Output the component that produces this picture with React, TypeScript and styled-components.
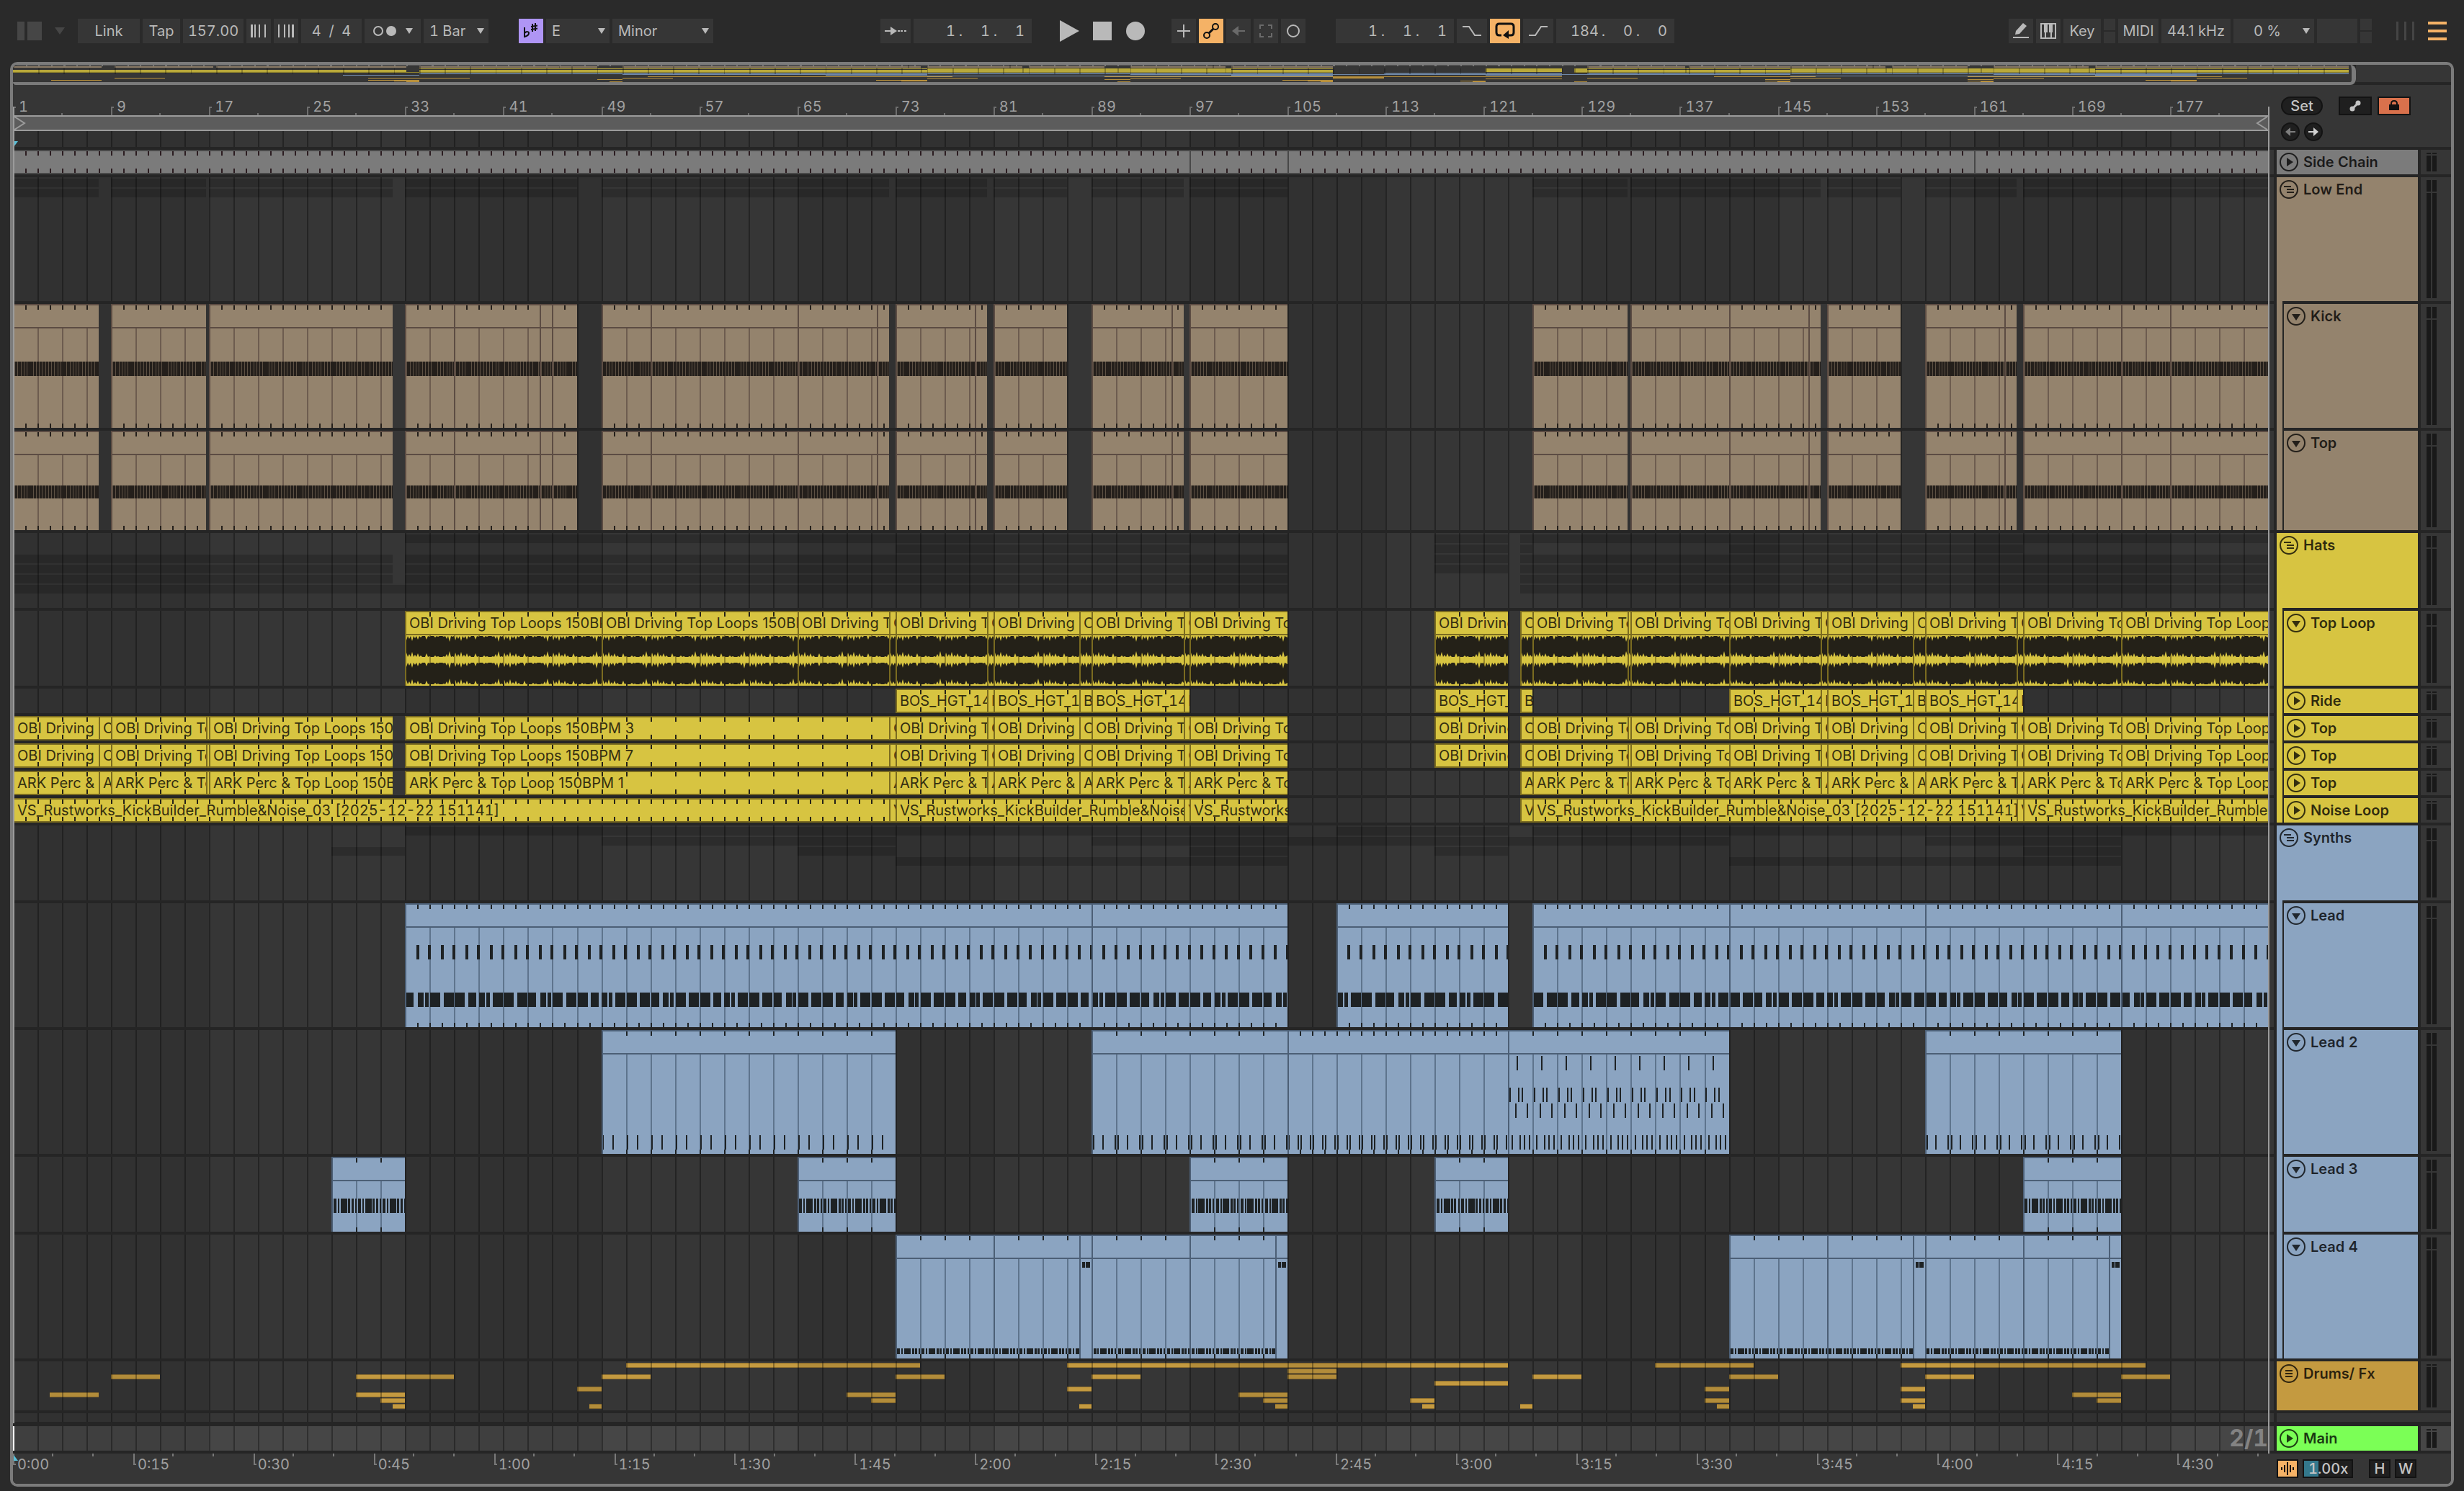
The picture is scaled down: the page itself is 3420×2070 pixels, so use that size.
import React from "react";
import styled, { createGlobalStyle, css } from "styled-components";

/* ---------- palette ---------- */

const c = {
  page: "#2a2a2a",
  control: "#363636",
  panel: "#363636",
  divider: "#252525",
  frame: "#7b7b7b",
  text: "#b9b9b9",
  dimText: "#a0a0a0",
  orange: "#f5b266",
  purple: "#af95f5",
  gray: "#7b7b7b",
  brown: "#94836d",
  yellow: "#d7c441",
  blue: "#8ba4c1",
  gold: "#c49a40",
  green: "#7bff56",
};

const GlobalStyle = createGlobalStyle`
  * { box-sizing: border-box; }
  body {
    margin: 0;
    background: ${c.page};
    color: ${c.text};
    font-family: Inter, "Open Sans", sans-serif;
    font-size: 20px;
    font-variant-numeric: tabular-nums;
    line-height: 24px;
  }
  button, input, select { font: inherit; font-variant-numeric: tabular-nums; color: inherit; margin: 0; padding: 0; border: 0; border-radius: 0; }
`;

/* ---------- time scale ---------- */

const BARS = 184;
const CANVAS = 3130;
const X = (bar: number) => Math.round(((bar - 1) * CANVAS) / BARS);
const pct = (px: number) => `${(px / CANVAS) * 100}%`;

type Range = [number, number];

/** Consecutive clips that share their boundaries. */
const chain = (...points: number[]): Range[] =>
  points.slice(1).map((end, i) => [points[i], end]);

/* ---------- arrangement data ---------- */

const kickClips = [
  ...chain(1, 8), ...chain(9, 16.75), ...chain(17, 32), ...chain(33, 37, 44, 45, 47),
  ...chain(49, 53, 65, 71.5, 72.5), ...chain(73, 79.5, 80.5), ...chain(81, 87),
  ...chain(89, 95.5, 96.5), ...chain(97, 105), ...chain(125, 132.75), ...chain(133, 141, 147.5, 148.5),
  ...chain(149, 155), ...chain(157, 163.5, 164.5), ...chain(165, 173, 177, 185),
];
const lateLoops = chain(124, 125, 132.75, 133, 141, 148.5, 149, 156, 157, 164.5, 165, 173, 185);
const topLoopClips = [
  ...chain(33, 49, 65, 72.5, 73, 80.5, 81, 88, 89, 96.5, 97, 105), ...chain(117, 123), ...lateLoops,
];
const rideClips = [
  ...chain(73, 80.5, 81, 88, 89, 96.5, 97), ...chain(117, 123), ...chain(124, 125),
  ...chain(141, 148.5, 149, 156, 157, 164.5, 165),
];
const earlyTops = [
  ...chain(1, 8, 9, 16.75, 17, 32), ...chain(33, 72.5, 73, 80.5, 81, 88, 89, 96.5, 97, 105),
];
const topClips = [...earlyTops, ...chain(117, 123), ...lateLoops];
const percClips = [...earlyTops, ...lateLoops];
const noiseClips = [...chain(1, 72.5, 73, 96.5, 97, 105), ...chain(124, 125, 164.5, 165, 185)];
const leadClips = [...chain(33, 89, 105), ...chain(109, 123), ...chain(125, 141, 157, 173, 185)];
const lead2Clips = [...chain(49, 73), ...chain(89, 105, 123, 141), ...chain(157, 173)];
const lead3Clips: Range[] = [[27, 33], [65, 73], [97, 105], [117, 123], [165, 173]];
const lead4Clips = [...chain(73, 81, 88, 89, 97, 104, 105), ...chain(141, 149, 156, 157, 165, 172, 173)];

const drumRows: Range[][] = [
  [[51, 75], [87, 123], [135, 143], [155, 175]],
  [[105, 109]],
  [[9, 13], [29, 37], [49, 53], [73, 77], [89, 93], [105, 109], [125, 129], [141, 145], [157, 161], [173, 177]],
  [[117, 123]],
  [[47, 49], [87, 89], [139, 141], [155, 157]],
  [[4, 8], [29, 33], [69, 73], [101, 105], [169, 173]],
  [[31, 33], [71, 73], [103, 105], [115, 117], [139, 141], [155, 157], [171, 173]],
  [[32, 33], [48, 49], [88, 89], [104, 105], [116, 117], [124, 125], [140, 141], [156, 157]],
];

type Kind = "side" | "kick" | "loop" | "audio" | "lead" | "lead2" | "lead3" | "lead4";
type Tone = "gray" | "brown" | "yellow" | "blue";

const tones: Record<Tone, { fill: string; edge: string; ink: string }> = {
  gray: { fill: c.gray, edge: "#484848", ink: "#2b1c20" },
  brown: { fill: c.brown, edge: "#5c4c43", ink: "#241f1b" },
  yellow: { fill: c.yellow, edge: "#7a6b20", ink: "#242118" },
  blue: { fill: c.blue, edge: "#4c5f76", ink: "#1e2224" },
};

/* ---------- clip drawings ---------- */

const rect = (x: number, y: number, w: number, h: number) => `M${x} ${y}h${w}v${h}h${-w}z`;

const phrase: Range[] = [[0.15, 0.4], [0.5, 0.62], [0.72, 1.25], [1.35, 1.5], [1.6, 1.8], [1.9, 2]];

function notesFor(kind: Kind, s: number, e: number): string {
  let d = "";
  const note = (bar: number, y: number, w: number, h: number) => {
    const x = X(bar);
    if (x >= X(s) && x < X(e)) d += rect(x, y, w, h);
  };
  if (kind === "lead") {
    for (let b = s; b < e; b++) {
      note(b + ((b - s) % 2 ? 0.86 : 0.9), 58, 4, 20);
      const cut = (b * 7) % 5;
      if (cut === 3) {
        note(b + 0.05, 124, 8, 20);
        note(b + 0.62, 124, 5, 20);
      } else {
        note(b + (b % 2 ? 0.06 : 0.14), 124, cut === 1 ? 11 : 14, 20);
      }
    }
  } else if (kind === "lead2") {
    if (s === 123) {
      for (let b = s; b < e; b += 2) {
        note(b + 0.7, 36, 2, 20);
        [0.1, 0.78, 1.12].forEach((o) => note(b + o, 80, 2, 20));
        [0.55, 1.5].forEach((o) => note(b + o, 102, 2, 20));
        [0.3, 0.9, 1.25, 1.7].forEach((o) => note(b + o, 146, 2, 20));
      }
    } else if (s === 105) {
      for (let b = s; b <= e; b++) [-0.18, 0.06].forEach((o) => note(b + o, 146, 2, 20));
    } else {
      const offsets = s === 49 ? [0.08, 0.92] : [-0.14, 0.14, 0.86];
      for (let b = s; b <= e; b += 2) offsets.forEach((o) => note(b + o, 146, 2, 20));
    }
  } else if (kind === "lead3" || kind === "lead4") {
    if (e - s === 1) {
      note(s + 0.25, 38, 4, 8);
      note(s + 0.55, 38, 6, 8);
    } else {
      const y = kind === "lead3" ? 58 : 158;
      const h = kind === "lead3" ? 20 : 8;
      for (let b = s; b < e; b += 2)
        phrase.forEach(([p, q]) => note(b + p, y, Math.max(2, Math.round((q - p) * 17)), h));
    }
  }
  return d;
}

const spikes = [2, 7, 1, 5, 3, 8, 2, 4, 1, 6, 2, 3, 5, 1, 9, 6, 2];

/** One audio channel: a solid band with a ragged edge above and below. */
function wavePath(x0: number, x1: number, top: number, bottom: number): string {
  let upper = `M${x0} ${top + 4}`;
  let lower = "";
  let i = 0;
  for (let x = x0; x < x1; x += 2, i++) {
    const a = spikes[i % 17];
    upper += `L${x} ${top + (i % 2 ? a : 1)}`;
    lower = `L${x} ${bottom - (i % 2 ? a : 1)}` + lower;
  }
  return `${upper}L${x1} ${top + 3}L${x1} ${bottom - 3}${lower}Z`;
}

function ClipArt({ kind, tone, s, e, h }: { kind: Kind; tone: Tone; s: number; e: number; h: number }) {
  const t = tones[tone];
  const x0 = X(s);
  const w = X(e) - x0;
  const slim = h === 34;
  const step = ["side", "kick", "lead"].includes(kind) || (kind === "lead2" && s === 105) ? 1 : 2;
  let ticks = "";
  let lines = "";
  for (let b = Math.floor(s) + 1; b < e; b++) {
    const even = (b - 1) % 2 === 0;
    if (step === 1 || even) ticks += rect(X(b), 2, 2, 6) + rect(X(b), slim ? h - 8 : h - 6, 2, 6);
    if (even && !slim) lines += rect(X(b), 34, 2, h - 34);
  }
  const band = kind === "kick" ? (h > 150 ? [80, 20] : [76, 18]) : null;
  let stripes = "";
  if (band) {
    const first = Math.ceil((s - 1) * 4);
    for (let i = first; i < (e - 1) * 4; i++)
      if (i % 11 !== 5) stripes += rect(Math.round((i * CANVAS) / BARS / 4) + 2, band[0], 1, band[1]);
  }
  return (
    <Art viewBox={`${x0} 0 ${w} ${h}`} preserveAspectRatio="none" shapeRendering="crispEdges" aria-hidden>
      <path d={lines} fill={t.edge} fillOpacity={0.7} />
      {!slim && <path d={rect(x0, 32, w, 2)} fill={t.edge} />}
      <path d={ticks} fill={t.ink} />
      {band && <path d={rect(x0, band[0], w, band[1])} fill={t.ink} />}
      <path d={stripes} fill="#5d5144" />
      {kind === "loop" && (
        <path d={wavePath(x0, x0 + w, 34, 65) + wavePath(x0, x0 + w, 71, 103)} fill={t.ink} shapeRendering="auto" />
      )}
      <path d={notesFor(kind, s, e)} fill={t.ink} />
      <path d={rect(x0, 0, w, 2) + (s > 1 ? rect(x0, 0, 2, h) : "") + (slim ? rect(x0, h - 2, w, 2) : "")} fill={t.edge} />
    </Art>
  );
}

function Grid() {
  let lines = "";
  let bands = "";
  for (let b = 3; b <= BARS; b += 2) lines += rect(X(b), 0, 2, 10);
  for (let b = 1; b <= BARS; b += 32) bands += rect(X(b), 0, X(b + 16) - X(b), 10);
  return (
    <Art viewBox={`0 0 ${CANVAS} 10`} preserveAspectRatio="none" shapeRendering="crispEdges" aria-hidden>
      <path d={bands} fill="#000" fillOpacity={0.09} />
      <path d={lines} fill="#000" fillOpacity={0.32} />
    </Art>
  );
}

/* ---------- toolbar ---------- */

const Toolbar = styled.header`
  display: flex;
  align-items: center;
  padding: 26px 10px;
`;

const Group = styled.div<{ $gap?: number }>`
  display: flex;
  align-items: center;
  gap: ${(p) => p.$gap ?? 4}px;
`;

const Spacer = styled.div<{ $grow?: number; $width?: number }>`
  flex: ${(p) => (p.$grow ? `${p.$grow} 1 0` : `0 0 ${p.$width}px`)};
`;

const ToolButton = styled.button<{ $w: number; $bg?: string; $fg?: string }>`
  display: flex;
  align-items: center;
  justify-content: center;
  width: ${(p) => p.$w}px;
  height: 34px;
  background: ${(p) => p.$bg ?? c.control};
  color: ${(p) => p.$fg ?? c.text};
  font-variant-numeric: normal;
  white-space: nowrap;
`;

const ToolInput = styled.input<{ $w: number }>`
  width: ${(p) => p.$w}px;
  height: 34px;
  background: ${c.control};
  text-align: center;
`;

const Box = styled.div<{ $w: number }>`
  display: flex;
  align-items: center;
  justify-content: center;
  width: ${(p) => p.$w}px;
  height: 34px;
  background: ${c.control};
`;

const SelectBox = styled.label<{ $w: number }>`
  display: grid;
  align-items: center;
  width: ${(p) => p.$w}px;
  height: 34px;
  background: ${c.control};
  > * { grid-area: 1 / 1; }
  > svg { justify-self: end; margin-right: 6px; pointer-events: none; }
`;

const Select = styled.select<{ $pad: number }>`
  appearance: none;
  width: 100%;
  height: 34px;
  padding-left: ${(p) => p.$pad}px;
  background: transparent;
  outline: 0;
`;

const PositionBox = styled.div`
  display: flex;
  align-items: center;
  justify-content: flex-end;
  width: 164px;
  height: 34px;
  padding-right: 10px;
  background: ${c.control};
`;

const PositionInput = styled.input`
  width: 38px;
  background: transparent;
  text-align: right;
`;

const Dot = styled.span`
  width: 10px;
  text-align: right;
`;

const TransportButton = styled.button`
  display: flex;
  width: 28px;
  height: 34px;
  align-items: center;
  justify-content: center;
  background: transparent;
`;

const SplitLed = styled.div`
  display: grid;
  grid-template-rows: 1fr 1fr;
  gap: 2px;
  width: 16px;
  height: 34px;
  > span { background: ${c.control}; }
`;

const Caret = () => (
  <svg width="10" height="10" viewBox="0 0 10 10" aria-hidden><path d="M0 1h10L5 9z" fill={c.text} /></svg>
);

function Drop({ w, value, label, pad = 8 }: { w: number; value: string; label: string; pad?: number }) {
  return (
    <SelectBox $w={w}>
      <Select $pad={pad} aria-label={label} defaultValue={value}><option>{value}</option></Select>
      <Caret />
    </SelectBox>
  );
}

function Position({ label, values }: { label: string; values: string[] }) {
  return (
    <PositionBox role="group" aria-label={label}>
      {values.map((v, i) => (
        <React.Fragment key={i}>
          <PositionInput defaultValue={v} aria-label={`${label} ${["bar", "beat", "sixteenth"][i]}`} />
          {i < 2 && <Dot>.</Dot>}
        </React.Fragment>
      ))}
    </PositionBox>
  );
}

function TopBar() {
  const ink = c.text;
  return (
    <Toolbar>
      <Group>
        <ToolButton $w={34} $bg="transparent" aria-label="Browser">
          <svg width="34" height="26"><path d="M0 0h10v26h-10zM14 0h20v26h-20z" fill="#464646" /></svg>
        </ToolButton>
        <ToolButton $w={42} $bg="transparent" aria-label="Browser options">
          <svg width="14" height="10"><path d="M0 0h14l-7 10z" fill="#464646" /></svg>
        </ToolButton>
        <ToolButton $w={86}>Link</ToolButton>
        <ToolButton $w={52}>Tap</ToolButton>
        <ToolInput $w={84} defaultValue="157.00" aria-label="Tempo" />
        <ToolButton $w={34} aria-label="Nudge down">
          <svg width="22" height="18"><path d="M0 0h3v18H0zM5 0h2v18H5zM11 0h2v18h-2zM19 0h2v18h-2z" fill={ink} /></svg>
        </ToolButton>
        <ToolButton $w={34} aria-label="Nudge up">
          <svg width="22" height="18"><path d="M0 0h2v18H0zM8 0h2v18H8zM14 0h2v18h-2zM19 0h3v18h-3z" fill={ink} /></svg>
        </ToolButton>
        <ToolInput $w={84} defaultValue="4  /  4" aria-label="Time signature" />
        <ToolButton $w={78} aria-label="Metronome">
          <svg width="56" height="16" viewBox="0 0 56 16">
            <circle cx="8" cy="8" r="6" fill="none" stroke={ink} strokeWidth="2" />
            <circle cx="26" cy="8" r="7" fill={ink} />
            <path d="M46 4h10l-5 8z" fill={ink} />
          </svg>
        </ToolButton>
        <Drop w={90} value="1 Bar" label="Quantization" />
        <Spacer $width={34} />
        <ToolButton $w={34} $bg={c.purple} $fg="#111" aria-label="Scale mode">
          <svg width="22" height="22" viewBox="0 0 22 22" fill="none" stroke="#111" strokeWidth="2">
            <path d="M2 6v13c4-1 6-3 6-5s-3-3-6 0" />
            <path d="M13 1v11M17 0v11M11 5l9-1.500M11 9l9-1.500" />
          </svg>
        </ToolButton>
        <Drop w={88} value="E" label="Root note" />
        <Drop w={140} value="Minor" label="Scale name" />
      </Group>
      <Spacer $grow={1} />
      <Group>
        <ToolButton $w={42} aria-label="Follow">
          <svg width="30" height="16"><path d="M0 7h8V2l9 6-9 6V9H0zM18 7h3v2h-3zM22 7h3v2h-3zM27 7h3v2h-3z" fill={ink} /></svg>
        </ToolButton>
        <Position label="Arrangement position" values={["1", "1", "1"]} />
        <Spacer $width={30} />
        <Group $gap={18}>
          <TransportButton aria-label="Play"><svg width="27" height="30"><path d="M0 0l27 15L0 30z" fill={ink} /></svg></TransportButton>
          <TransportButton aria-label="Stop"><svg width="26" height="26"><path d="M0 0h26v26H0z" fill={ink} /></svg></TransportButton>
          <TransportButton aria-label="Record"><svg width="26" height="26"><circle cx="13" cy="13" r="13" fill={ink} /></svg></TransportButton>
        </Group>
        <Spacer $width={28} />
        <ToolButton $w={34} aria-label="Overdub"><svg width="18" height="18"><path d="M8 0h2v8h8v2h-8v8H8v-8H0V8h8z" fill={ink} /></svg></ToolButton>
        <ToolButton $w={34} $bg={c.orange} aria-label="Automation arm">
          <svg width="24" height="24" fill="none" stroke="#111" strokeWidth="2">
            <circle cx="6" cy="18" r="4" /><circle cx="18" cy="6" r="4" /><path d="M9 15l6-6" strokeWidth="3" />
          </svg>
        </ToolButton>
        <ToolButton $w={34} aria-label="Re-enable automation"><svg width="18" height="16"><path d="M0 8l9-7v6h9v2H9v6z" fill="#6a6a6a" /></svg></ToolButton>
        <ToolButton $w={34} aria-label="Capture"><svg width="18" height="18" fill="none" stroke="#6a6a6a" strokeWidth="2"><path d="M1 6V1h5M12 1h5v5M17 12v5h-5M6 17H1v-5" /></svg></ToolButton>
        <ToolButton $w={34} aria-label="Session record"><svg width="18" height="18" fill="none" stroke={ink} strokeWidth="2"><circle cx="9" cy="9" r="8" /></svg></ToolButton>
        <Spacer $width={34} />
        <Position label="Loop start" values={["1", "1", "1"]} />
        <ToolButton $w={42} aria-label="Punch in"><svg width="26" height="16" fill="none" stroke={ink} strokeWidth="2"><path d="M0 2h9l8 12h9" /></svg></ToolButton>
        <ToolButton $w={42} $bg={c.orange} aria-label="Loop">
          <svg width="28" height="24" fill="none" stroke="#111" strokeWidth="3"><path d="M9 18H6q-4 0-4-4V6q0-4 4-4h16q4 0 4 4v8q0 4-4 4h-4" /><path d="M19 11v12l-8-5z" fill="#111" stroke="none" /></svg>
        </ToolButton>
        <ToolButton $w={42} aria-label="Punch out"><svg width="26" height="16" fill="none" stroke={ink} strokeWidth="2"><path d="M0 14h9l8-12h9" /></svg></ToolButton>
        <Position label="Loop length" values={["184", "0", "0"]} />
      </Group>
      <Spacer $grow={2} />
      <Group>
        <ToolButton $w={34} aria-label="Draw mode"><svg width="24" height="24"><path d="M4 17l1-5L15 1l5 4L10 16zM1 20h22v2H1z" fill={ink} /></svg></ToolButton>
        <ToolButton $w={34} aria-label="Computer MIDI keyboard">
          <svg width="22" height="22" fill={ink}><path fillRule="evenodd" d="M0 0h22v22H0zM2 2v18h4v-7H5V2zM9 2v11H8v7h6v-7h-1V2zM17 2v11h-1v7h4V2z" /><path d="M9 2h1v11H9zM12 2h1v11h-1z" /></svg>
        </ToolButton>
        <ToolButton $w={52}>Key</ToolButton>
        <SplitLed><span /><span /></SplitLed>
        <ToolButton $w={56}>MIDI</ToolButton>
        <ToolButton $w={96}>44.1 kHz</ToolButton>
        <Drop w={112} value="0 %" label="CPU load" pad={28} />
        <Box $w={56} />
        <SplitLed><span /><span /></SplitLed>
        <Spacer $width={26} />
        <ToolButton $w={26} $bg="transparent" aria-label="Session view"><svg width="26" height="26"><path d="M0 0h3v26H0zM11 0h3v26h-3zM22 0h3v26h-3z" fill="#454545" /></svg></ToolButton>
        <Spacer $width={10} />
        <ToolButton $w={26} $bg="transparent" aria-label="Arrangement view"><svg width="26" height="26"><path d="M0 0h26v4H0zM0 11h26v4H0zM0 22h26v4H0z" fill={c.orange} /></svg></ToolButton>
      </Group>
    </Toolbar>
  );
}

/* ---------- panel frame and overview ---------- */

const Page = styled.div`
  padding: 0 14px 6px;
`;

const Panel = styled.main`
  position: relative;
  border: 4px solid ${c.frame};
  border-radius: 10px;
  background: ${c.divider};
  overflow: hidden;
`;

const OverviewRow = styled.div`
  display: flex;
  height: 28px;
`;

const OverviewBox = styled.div`
  flex: 1;
  padding-right: 4px;
  border: solid ${c.frame};
  border-width: 0 6px 4px 0;
  border-radius: 0 8px 8px 4px;
  background: ${c.panel};
  > svg { display: block; width: 100%; height: 24px; }
`;

const OverviewRest = styled.div`
  width: 132px;
  height: 24px;
  background: ${c.panel};
`;

function Overview() {
  const row = (clips: Range[], y: number, h: number) => clips.map(([s, e]) => rect(s - 1, y, e - s, h)).join("");
  const lines = (clips: Range[], y: number, h: number) => clips.map(([s]) => rect(s - 1, y, 0.1, h)).join("");
  let ticks = "";
  let yTicks = "";
  for (let b = 1; b < BARS; b++) {
    ticks += rect(b, 0, 0.12, 2);
    if (b % 2 === 0) yTicks += rect(b, 5, 0.1, 8);
  }
  return (
    <OverviewRow>
      <OverviewBox>
        <svg viewBox="0 0 184 24" preserveAspectRatio="none" role="img" aria-label="Arrangement overview" shapeRendering="crispEdges">
          <path d={rect(0, 0, 184, 1)} fill="#5e5e5e" />
          <path d={ticks} fill="#777" />
          <path d={row(kickClips, 2, 2)} fill="#8a7a66" />
          <path d={row(topLoopClips, 5, 1) + row(rideClips, 6, 1) + row(topClips, 7, 3)} fill="#b8a83a" />
          <path d={row(noiseClips, 10, 1)} fill="#8e812c" />
          <path d={row(leadClips, 11, 2)} fill="#62768e" />
          <path d={row(lead2Clips, 13, 1) + row(lead3Clips, 14, 1) + row(lead4Clips, 15, 1)} fill="#7088a8" />
          <path d={yTicks + lines(kickClips, 0, 5) + lines(topLoopClips, 5, 6)} fill="#000" fillOpacity={0.25} />
          <path d={drumRows.map((r, i) => row(r, 16 + i, 1)).join("")} fill="#b8903c" />
        </svg>
      </OverviewBox>
      <OverviewRest />
    </OverviewRow>
  );
}

/* ---------- rulers ---------- */

const TopRow = styled.div`
  display: flex;
  margin-bottom: 4px;
  background: ${c.panel};
`;

const TopTimeline = styled.div`
  flex: 1;
  min-width: 0;
`;

const BarRuler = styled.div`
  display: grid;
  grid-template-columns: repeat(23, minmax(0, 1fr));
  align-items: end;
  height: 42px;
  color: ${c.dimText};
`;

const BarMark = styled.div`
  height: 24px;
  padding-left: 8px;
  background:
    linear-gradient(#6e6e6e, #6e6e6e) 0 100% / 2px 12px no-repeat,
    linear-gradient(#6e6e6e, #6e6e6e) 0 12px / 4px 2px no-repeat,
    linear-gradient(#6e6e6e, #6e6e6e) 50% 100% / 2px 3px no-repeat;
`;

const LoopBrace = styled.div`
  display: flex;
  justify-content: space-between;
  height: 22px;
  border: solid #9b9b9b;
  border-width: 2px 0;
  background: #5c5c5c;
`;

const Scrub = styled.div`
  position: relative;
  height: 22px;
`;

const Art = styled.svg`
  position: absolute;
  inset: 0;
  display: block;
  width: 100%;
  height: 100%;
`;

const Marker = styled.svg<{ $bottom?: boolean }>`
  position: absolute;
  left: 1px;
  ${(p) => (p.$bottom ? "top: 2px;" : "bottom: 0;")}
`;

const CornerTools = styled.div`
  display: grid;
  grid-template-rows: 26px 26px;
  row-gap: 10px;
  align-content: start;
  width: 254px;
  padding: 16px 0 0 18px;
`;

const DarkButton = styled.button<{ $w: number; $round?: boolean; $bg?: string }>`
  display: flex;
  align-items: center;
  justify-content: center;
  width: ${(p) => p.$w}px;
  height: 26px;
  border: 2px solid #131313;
  border-radius: ${(p) => (p.$round ? 13 : 0)}px;
  background: ${(p) => p.$bg ?? "#1f1f1f"};
  color: #c4c4c4;
  font-weight: 500;
`;

function TopSection() {
  return (
    <TopRow>
      <TopTimeline>
        <BarRuler>
          {Array.from({ length: 23 }, (_, i) => <BarMark key={i}>{i * 8 + 1}</BarMark>)}
        </BarRuler>
        <LoopBrace>
          <svg width="18" height="18" fill="none" stroke="#9b9b9b" strokeWidth="2"><path d="M2 0l14 9-14 9" /></svg>
          <svg width="18" height="18" fill="none" stroke="#9b9b9b" strokeWidth="2"><path d="M17 0L3 9l14 9" /></svg>
        </LoopBrace>
        <Scrub>
          <Grid />
          <Marker width="7" height="8"><path d="M0 0h6L0 8z" fill="#58bfd8" /></Marker>
        </Scrub>
      </TopTimeline>
      <CornerTools>
        <Group $gap={8}>
          <DarkButton $w={58} $round>Set</DarkButton>
          <Spacer $width={6} />
          <DarkButton $w={46} aria-label="Automation mode">
            <svg width="16" height="16"><circle cx="4" cy="12" r="3.500" fill="#c4c4c4" /><circle cx="12" cy="4" r="3.500" fill="#c4c4c4" /><path d="M4 12l8-8" stroke="#c4c4c4" strokeWidth="3" /></svg>
          </DarkButton>
          <DarkButton $w={46} $bg="#d9714c" aria-label="Lock envelopes">
            <svg width="14" height="16"><path d="M0 6h14v8H0z" fill="#111" /><path d="M3 7V5q0-4 4-4t4 4v2" fill="none" stroke="#111" strokeWidth="2" /></svg>
          </DarkButton>
        </Group>
        <Group $gap={6}>
          <DarkButton $w={26} $round aria-label="Previous locator"><svg width="14" height="12"><path d="M0 6l7-6v5h7v2H7v5z" fill="#7d7d7d" /></svg></DarkButton>
          <DarkButton $w={26} $round aria-label="Next locator"><svg width="14" height="12"><path d="M14 6L7 0v5H0v2h7v5z" fill="#d0d0d0" /></svg></DarkButton>
        </Group>
      </CornerTools>
    </TopRow>
  );
}

/* ---------- tracks ---------- */

const Tracks = styled.div`
  display: flex;
  flex-direction: column;
  gap: 4px;
`;

const TrackRow = styled.section<{ $h: number }>`
  display: grid;
  grid-template-columns: minmax(0, 1fr) 196px 42px;
  column-gap: 4px;
  height: ${(p) => p.$h}px;
`;

const Lane = styled.div<{ $bg?: string }>`
  padding-right: 8px;
  background: ${(p) => p.$bg ?? c.panel};
`;

const Canvas = styled.div`
  position: relative;
  height: 100%;
`;

const ClipBox = styled.div<{ $tone: Tone }>`
  position: absolute;
  top: 0;
  bottom: 0;
  overflow: hidden;
  background: ${(p) => tones[p.$tone].fill};
`;

const ClipName = styled.div<{ $tabular: boolean }>`
  position: relative;
  padding-left: 6px;
  overflow: hidden;
  line-height: 34px;
  font-variant-numeric: ${(p) => (p.$tabular ? "tabular-nums" : "normal")};
  white-space: nowrap;
  color: #332e10;
`;

const MiniClip = styled.div<{ $gold?: boolean }>`
  position: absolute;
  ${(p) =>
    p.$gold
      ? css`
          height: 7px;
          background: ${c.gold};
          border: solid #8f7030;
          border-width: 1px 0;
        `
      : css`
          height: 12px;
          background: rgba(0, 0, 0, 0.17);
        `}
`;

const HeaderCell = styled.div`
  display: flex;
  gap: 2px;
`;

const GroupStrip = styled.div<{ $color: string }>`
  width: 8px;
  background: ${(p) => p.$color};
  box-shadow: 0 -4px 0 ${(p) => p.$color};
`;

const Title = styled.div<{ $color: string }>`
  flex: 1;
  display: flex;
  align-items: flex-start;
  gap: 7px;
  padding: 4px;
  background: ${(p) => p.$color};
  color: rgba(0, 0, 0, 0.78);
  font-weight: 600;
  line-height: 26px;
  white-space: nowrap;
`;

const FoldButton = styled.button`
  width: 26px;
  height: 26px;
  background: transparent;
  > svg { display: block; }
`;

const MeterCell = styled.div<{ $bg?: string }>`
  display: grid;
  grid-template-columns: 6px 6px;
  column-gap: 2px;
  padding: 4px 8px;
  background: ${(p) => p.$bg ?? c.panel};
`;

const Meter = styled.div<{ $peak: number }>`
  display: grid;
  grid-template-rows: ${(p) => p.$peak}px 1fr;
  row-gap: 2px;
  > span { background: #191919; }
`;

type Fold = "right" | "down" | "group" | "list";

const foldPaths: Record<Fold, string> = {
  right: "M10 7l9 6-9 6z",
  down: "M7 10h12l-6 9z",
  group: "M6 8h10v2H6zM10 12h10v2H10zM10 16h10v2H10z",
  list: "M8 8h10v2H8zM8 12h10v2H8zM8 16h10v2H8z",
};

function Header({ name, color, fold, strip }: { name: string; color: string; fold: Fold; strip?: string }) {
  return (
    <HeaderCell>
      {strip && <GroupStrip $color={strip} />}
      <Title $color={color}>
        <FoldButton aria-label={`Fold ${name}`}>
          <svg width="26" height="26">
            <circle cx="13" cy="13" r="12" fill="none" stroke="#000" strokeOpacity="0.760" strokeWidth="2" />
            <path d={foldPaths[fold]} fillOpacity="0.760" />
          </svg>
        </FoldButton>
        {name}
      </Title>
    </HeaderCell>
  );
}

function Meters({ tall, bg }: { tall: boolean; bg?: string }) {
  const peak = tall ? 16 : 2;
  return (
    <MeterCell $bg={bg}>
      <Meter $peak={peak}><span /><span /></Meter>
      <Meter $peak={peak}><span /><span /></Meter>
    </MeterCell>
  );
}

interface Track {
  name: string;
  h: number;
  fold: Fold;
  color: string;
  strip?: string;
  kind?: Kind;
  tone?: Tone;
  clips?: Range[];
  clipName?: string;
  ghosts?: Range[][];
  gold?: boolean;
}

/** Joins touching ranges, for the folded summary of a group. */
const merged = (clips: Range[]): Range[] =>
  clips.reduce<Range[]>((out, [s, e]) => {
    const last = out[out.length - 1];
    if (last && last[1] === s) last[1] = e;
    else out.push([s, e]);
    return out;
  }, []);

const tracks: Track[] = [
  { name: "Side Chain", h: 34, fold: "right", color: c.gray, kind: "side", tone: "gray", clips: chain(1, 97, 105, 161, 185) },
  { name: "Low End", h: 172, fold: "group", color: c.brown, ghosts: [merged(kickClips), merged(kickClips)] },
  { name: "Kick", h: 172, fold: "down", color: c.brown, strip: c.brown, kind: "kick", tone: "brown", clips: kickClips },
  { name: "Top", h: 138, fold: "down", color: c.brown, strip: c.brown, kind: "kick", tone: "brown", clips: kickClips },
  { name: "Hats", h: 104, fold: "group", color: c.yellow, ghosts: [topLoopClips, rideClips, topClips, topClips, percClips, noiseClips].map(merged) },
  { name: "Top Loop", h: 104, fold: "down", color: c.yellow, strip: c.yellow, kind: "loop", tone: "yellow", clips: topLoopClips, clipName: "OBI Driving Top Loops 150BPM 3" },
  { name: "Ride", h: 34, fold: "right", color: c.yellow, strip: c.yellow, kind: "audio", tone: "yellow", clips: rideClips, clipName: "BOS_HGT_14" },
  { name: "Top", h: 34, fold: "right", color: c.yellow, strip: c.yellow, kind: "audio", tone: "yellow", clips: topClips, clipName: "OBI Driving Top Loops 150BPM 3" },
  { name: "Top", h: 34, fold: "right", color: c.yellow, strip: c.yellow, kind: "audio", tone: "yellow", clips: topClips, clipName: "OBI Driving Top Loops 150BPM 7" },
  { name: "Top", h: 34, fold: "right", color: c.yellow, strip: c.yellow, kind: "audio", tone: "yellow", clips: percClips, clipName: "ARK Perc & Top Loop 150BPM 1" },
  { name: "Noise Loop", h: 34, fold: "right", color: c.yellow, strip: c.yellow, kind: "side", tone: "yellow", clips: noiseClips, clipName: "VS_Rustworks_KickBuilder_Rumble&Noise_03 [2025-12-22 151141]" },
  { name: "Synths", h: 104, fold: "group", color: c.blue, ghosts: [leadClips, lead2Clips, lead3Clips, lead4Clips].map(merged) },
  { name: "Lead", h: 172, fold: "down", color: c.blue, strip: c.blue, kind: "lead", tone: "blue", clips: leadClips },
  { name: "Lead 2", h: 172, fold: "down", color: c.blue, strip: c.blue, kind: "lead2", tone: "blue", clips: lead2Clips },
  { name: "Lead 3", h: 104, fold: "down", color: c.blue, strip: c.blue, kind: "lead3", tone: "blue", clips: lead3Clips },
  { name: "Lead 4", h: 172, fold: "down", color: c.blue, strip: c.blue, kind: "lead4", tone: "blue", clips: lead4Clips },
  { name: "Drums/ Fx", h: 68, fold: "list", color: c.gold, ghosts: drumRows, gold: true },
];

function TrackView({ t }: { t: Track }) {
  const pitch = t.gold ? 8.2 : 14;
  return (
    <TrackRow $h={t.h}>
      <Lane>
        <Canvas>
          {t.ghosts?.map((r, i) =>
            r.map(([s, e]) => (
              <MiniClip
                key={`${i}-${s}`}
                $gold={t.gold}
                style={{ top: 2 + Math.round(i * pitch), left: pct(X(s)), width: pct(X(e) - X(s)) }}
              />
            ))
          )}
          <Grid />
          {t.clips?.map(([s, e]) => (
            <ClipBox key={s} $tone={t.tone!} style={{ left: pct(X(s)), width: pct(X(e) - X(s)) }}>
              <ClipArt kind={t.kind!} tone={t.tone!} s={s} e={e} h={t.h} />
              {t.clipName && <ClipName $tabular={t.clipName.includes("_")}>{t.clipName}</ClipName>}
            </ClipBox>
          ))}
        </Canvas>
      </Lane>
      <Header name={t.name} color={t.color} fold={t.fold} strip={t.strip} />
      <Meters tall={t.h > 70} />
    </TrackRow>
  );
}

/* ---------- footer ---------- */

const EmptyRow = styled.div`
  display: grid;
  grid-template-columns: minmax(0, 1fr) 242px;
  column-gap: 4px;
  height: 12px;
  margin-bottom: 2px;
  > * { background: ${c.panel}; }
`;

const Fraction = styled.div`
  position: absolute;
  right: 0;
  bottom: 0;
  color: #838383;
  font-size: 32px;
  font-weight: 700;
  line-height: 34px;
`;

const StartLine = styled.div`
  position: absolute;
  left: 0;
  top: 0;
  bottom: 0;
  width: 2px;
  background: #fff;
`;

const FooterRow = styled.div`
  display: flex;
  margin-top: 4px;
  background: ${c.panel};
`;

const TimeRuler = styled.div`
  position: relative;
  flex: 1;
  display: flex;
  min-width: 0;
  height: 42px;
  overflow: hidden;
  color: ${c.dimText};
`;

/* 15 seconds at 157 BPM take 9.8125 bars */
const TimeMark = styled.div`
  flex: 0 0 ${(9.8125 / BARS) * 100}%;
  padding: 3px 0 0 6px;
  background:
    linear-gradient(#7a7a7a, #7a7a7a) 0 0 / 2px 16px no-repeat,
    linear-gradient(#7a7a7a, #7a7a7a) 0 14px / 4px 2px no-repeat,
    linear-gradient(#7a7a7a, #7a7a7a) 33% 0 / 2px 4px no-repeat,
    linear-gradient(#7a7a7a, #7a7a7a) 67% 0 / 2px 4px no-repeat;
`;

const FooterTools = styled.div`
  display: flex;
  align-items: flex-start;
  gap: 6px;
  width: 254px;
  padding: 8px 0 0 12px;
`;

const ZoomInput = styled.input`
  width: 70px;
  height: 26px;
  padding-left: 6px;
  border: 2px solid #131313;
  background: linear-gradient(90deg, #34788c 20px, #1f1f1f 20px);
  color: #c4c4c4;
  font-weight: 500;
`;

const EdgeLine = styled.div`
  position: absolute;
  top: 58px;
  right: 252px;
  bottom: 42px;
  width: 2px;
  background: #9b9b9b;
`;

const OriginLine = styled.div`
  position: absolute;
  z-index: 1;
  top: 58px;
  left: 0;
  bottom: 84px;
  width: 2px;
  background: #9b9b9b;
`;

export default function App() {
  return (
    <>
      <GlobalStyle />
      <Page>
        <TopBar />
        <Panel>
          <Overview />
          <TopSection />
          <OriginLine />
          <Tracks>
            {tracks.map((t, i) => <TrackView key={i} t={t} />)}
            <EmptyRow>
              <Lane><Canvas><Grid /></Canvas></Lane>
              <div />
            </EmptyRow>
            <TrackRow $h={34}>
              <Lane $bg="#464646">
                <Canvas>
                  <Grid />
                  <StartLine />
                  <Fraction>2/1</Fraction>
                </Canvas>
              </Lane>
              <Header name="Main" color={c.green} fold="right" />
              <Meters tall={false} bg="#464646" />
            </TrackRow>
          </Tracks>
          <EdgeLine />
          <FooterRow>
            <TimeRuler>
              {Array.from({ length: 19 }, (_, i) => (
                <TimeMark key={i}>{`${Math.floor(i / 4)}:${String((i % 4) * 15).padStart(2, "0")}`}</TimeMark>
              ))}
              <Marker $bottom width="7" height="8"><path d="M0 0l6 8H0z" fill="#58bfd8" /></Marker>
            </TimeRuler>
            <FooterTools>
              <DarkButton $w={30} $bg={c.orange} aria-label="Waveform zoom">
                <svg width="18" height="18"><path d="M0 7h2v4H0zM4 4h2v10H4zM8 0h2v18H8zM12 4h2v10h-2zM16 7h2v4h-2z" fill="#111" /></svg>
              </DarkButton>
              <ZoomInput defaultValue="1.00x" aria-label="Vertical zoom" />
              <Spacer $width={10} />
              <DarkButton $w={30}>H</DarkButton>
              <DarkButton $w={30}>W</DarkButton>
            </FooterTools>
          </FooterRow>
        </Panel>
      </Page>
    </>
  );
}
